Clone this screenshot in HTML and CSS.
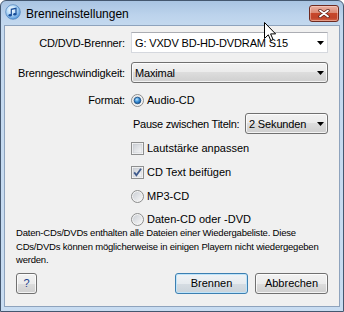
FILE: index.html
```html
<!DOCTYPE html>
<html lang="de">
<head>
<meta charset="utf-8">
<title>Brenneinstellungen</title>
<link rel="stylesheet" href="styles.css">
</head>
<body>
<svg class="defs" width="0" height="0" aria-hidden="true">
  <defs>
    <radialGradient id="iconGrad" cx="0.4" cy="0.35" r="0.75">
      <stop offset="0" stop-color="#ffffff"/>
      <stop offset="0.45" stop-color="#b4daf8"/>
      <stop offset="1" stop-color="#3b84d2"/>
    </radialGradient>
    <linearGradient id="boxGrad" x1="0" y1="0" x2="1" y2="1">
      <stop offset="0" stop-color="#cbcfd5"/>
      <stop offset="1" stop-color="#f7f7f7"/>
    </linearGradient>
    <radialGradient id="dotGrad" cx="0.4" cy="0.35" r="0.7">
      <stop offset="0" stop-color="#b9e6ff"/>
      <stop offset="0.5" stop-color="#3b8fd6"/>
      <stop offset="1" stop-color="#0d4c8f"/>
    </radialGradient>
  </defs>
</svg>
<div class="window">
  <div class="titlebar">
    <svg class="app-icon" width="16" height="16" viewBox="0 0 16 16">
      <circle cx="8" cy="8" r="7.3" fill="url(#iconGrad)" stroke="#4a7fb8" stroke-width="0.7"/>
      <path d="M6.3 11.2V5.3L11 4.3V10.2" fill="none" stroke="#174c98" stroke-width="1.2"/>
      <ellipse cx="5.1" cy="11.3" rx="1.6" ry="1.2" fill="#174c98"/>
      <ellipse cx="9.8" cy="10.3" rx="1.6" ry="1.2" fill="#174c98"/>
    </svg>
    <span class="title">Brenneinstellungen</span>
    <div class="close-btn">
      <svg width="12" height="9" viewBox="0 0 12 9">
        <path d="M2 1.5L10 7.5M10 1.5L2 7.5" stroke="#5b2118" stroke-width="3.4" stroke-linecap="round"/>
        <path d="M2 1.5L10 7.5M10 1.5L2 7.5" stroke="#ffffff" stroke-width="1.8" stroke-linecap="round"/>
      </svg>
    </div>
  </div>

  <div class="client">
    <div class="row">
      <span class="label">CD/DVD-Brenner:</span>
      <div class="combo combo-edit"><span class="combo-text">G: VXDV BD-HD-DVDRAM S15</span><i class="arrow"></i></div>
    </div>
    <div class="row row-speed">
      <span class="label">Brenngeschwindigkeit:</span>
      <div class="combo combo-list"><span class="combo-text">Maximal</span><i class="arrow"></i></div>
    </div>
    <div class="row row-format">
      <span class="label">Format:</span>
      <div class="option">
        <svg class="radio" width="13" height="13" viewBox="0 0 13 13">
          <circle cx="6.5" cy="6.5" r="6" fill="#f4f4f4" stroke="#8b8c8c"/>
          <circle cx="6.5" cy="6.5" r="4.6" fill="url(#boxGrad)"/>
          <circle cx="6.5" cy="6.5" r="3.3" fill="url(#dotGrad)" stroke="#1b4d80" stroke-width="0.8"/>
        </svg>
        <span>Audio-CD</span>
      </div>
    </div>

    <div class="options">
      <div class="pause-row">
        <span class="pause-label">Pause zwischen Titeln:</span>
        <div class="combo combo-list combo-small"><span class="combo-text">2 Sekunden</span><i class="arrow"></i></div>
      </div>
      <div class="option opt-volume">
        <svg class="check" width="13" height="13" viewBox="0 0 13 13">
          <rect x="0.5" y="0.5" width="12" height="12" fill="#ffffff" stroke="#8e8f8f"/>
          <rect x="2" y="2" width="9" height="9" fill="url(#boxGrad)" stroke="#c3c6cb" stroke-width="0.6"/>
        </svg>
        <span>Lautstärke anpassen</span>
      </div>
      <div class="option opt-cdtext">
        <svg class="check" width="13" height="13" viewBox="0 0 13 13">
          <rect x="0.5" y="0.5" width="12" height="12" fill="#ffffff" stroke="#8e8f8f"/>
          <rect x="2" y="2" width="9" height="9" fill="url(#boxGrad)" stroke="#c3c6cb" stroke-width="0.6"/>
          <path d="M3.2 6.4L5.4 9.2L10 2.8" fill="none" stroke="#3f5a8c" stroke-width="1.8"/>
        </svg>
        <span>CD Text beifügen</span>
      </div>
      <div class="option opt-mp3">
        <svg class="radio" width="13" height="13" viewBox="0 0 13 13">
          <circle cx="6.5" cy="6.5" r="6" fill="#f4f4f4" stroke="#8b8c8c"/>
          <circle cx="6.5" cy="6.5" r="4.6" fill="url(#boxGrad)"/>
        </svg>
        <span>MP3-CD</span>
      </div>
      <div class="option opt-data">
        <svg class="radio" width="13" height="13" viewBox="0 0 13 13">
          <circle cx="6.5" cy="6.5" r="6" fill="#f4f4f4" stroke="#8b8c8c"/>
          <circle cx="6.5" cy="6.5" r="4.6" fill="url(#boxGrad)"/>
        </svg>
        <span>Daten-CD oder -DVD</span>
      </div>
    </div>

    <p class="note">Daten-CDs/DVDs enthalten alle Dateien einer Wiedergabeliste. Diese CDs/DVDs können möglicherweise in einigen Playern nicht wiedergegeben werden.</p>

    <div class="buttons">
      <button class="btn btn-help" type="button">?</button>
      <span class="spacer"></span>
      <button class="btn btn-default" type="button">Brennen</button>
      <button class="btn" type="button">Abbrechen</button>
    </div>
  </div>

  <svg class="cursor" width="13" height="20" viewBox="0 0 13 20">
    <path d="M0.5 0.5V16.5L4.3 12.8L6.8 18.6L9.1 17.6L6.6 11.9H11.6Z" fill="#ffffff" stroke="#000000" stroke-width="1" stroke-linejoin="miter"/>
  </svg>
</div>
</body>
</html>
```

FILE: styles.css
```css
* {
  box-sizing: border-box;
}

html,
body {
  margin: 0;
  padding: 0;
  background: #ffffff;
}

body {
  font-family: "Liberation Sans", Arial, sans-serif;
  font-size: 11px;
  color: #000000;
}

.defs {
  position: absolute;
  width: 0;
  height: 0;
}

.window {
  position: relative;
  width: 344px;
  height: 312px;
  border: 1px solid #44576f;
  border-radius: 6px 6px 0 0;
  background: linear-gradient(to bottom, #a9c4e2 0px, #bcd3ec 14px, #c4d9ef 25px, #c8dcf1 100%);
  padding: 0 3px 4px;
  display: flex;
  flex-direction: column;
  overflow: hidden;
}

.titlebar {
  height: 24px;
  display: flex;
  align-items: flex-start;
  flex: none;
}

.app-icon {
  margin: 3px 0 0 1px;
  flex: none;
}

.title {
  margin: 5px 0 0 5px;
  font-size: 12px;
  line-height: 16px;
  color: #000000;
}

.close-btn {
  margin: 4px 1px 0 auto;
  width: 30px;
  height: 17px;
  border: 1px solid #6e2a20;
  border-radius: 3px;
  background: linear-gradient(to bottom, #eab0a2 0%, #dc8a74 45%, #c7472b 50%, #c1442a 80%, #d56a4c 100%);
  box-shadow: inset 0 0 0 1px rgba(255, 225, 215, 0.45);
  display: flex;
  align-items: center;
  justify-content: center;
}

.client {
  flex: 1;
  background: #f0f0f0;
  border: 1px solid #8ea3bd;
  padding: 6px 0 0 0;
  display: flex;
  flex-direction: column;
}

.row {
  display: flex;
  align-items: center;
  column-gap: 6px;
}

.label {
  width: 120px;
  text-align: right;
  letter-spacing: -0.15px;
  white-space: nowrap;
  flex: none;
}

.row-speed {
  margin-top: 9px;
}

.row-format {
  margin-top: 10px;
  height: 14px;
}

.combo {
  position: relative;
  width: 197px;
  height: 21px;
  display: flex;
  align-items: center;
  padding-left: 3px;
  flex: none;
  white-space: nowrap;
}

.combo-text {
  line-height: 14px;
  letter-spacing: -0.15px;
}

.combo-edit {
  background: #ffffff;
  border: 1px solid #d5d8de;
  border-top-color: #abadb3;
}

.combo-list {
  border: 1px solid #707070;
  border-radius: 3px;
  background: linear-gradient(to bottom, #f2f2f2 0%, #ebebeb 50%, #dddddd 50%, #cfcfcf 100%);
  box-shadow: inset 0 0 0 1px rgba(255, 255, 255, 0.75);
}

.arrow {
  position: absolute;
  right: 3px;
  top: 8px;
  width: 7px;
  height: 4px;
  background: #000000;
  clip-path: polygon(0 0, 100% 0, 50% 100%);
}

.option {
  display: flex;
  align-items: center;
  column-gap: 3px;
  height: 13px;
  line-height: 13px;
  white-space: nowrap;
}

.option svg {
  flex: none;
}

.options {
  margin-left: 126px;
  display: flex;
  flex-direction: column;
}

.pause-row {
  margin-top: 6px;
  margin-left: 2px;
  width: 195px;
  display: flex;
  align-items: center;
  justify-content: space-between;
  white-space: nowrap;
}

.pause-label {
  letter-spacing: -0.25px;
  flex: none;
}

.combo-small {
  width: 83px;
}

.opt-volume {
  margin-top: 8px;
}

.opt-cdtext {
  margin-top: 11px;
}

.opt-mp3 {
  margin-top: 11px;
}

.opt-data {
  margin-top: 10px;
}

.note {
  margin: 0;
  padding: 0 6px 0 11px;
  font-size: 9.5px;
  line-height: 13.5px;
  letter-spacing: -0.2px;
}

.buttons {
  margin-top: 6px;
  padding: 0 11px 0 11px;
  display: flex;
  column-gap: 7px;
}

.spacer {
  flex: 1;
}

.btn {
  height: 21px;
  width: 73px;
  padding: 0;
  border: 1px solid #707070;
  border-radius: 3px;
  background: linear-gradient(to bottom, #f2f2f2 0%, #ebebeb 50%, #dddddd 50%, #cfcfcf 100%);
  box-shadow: inset 0 0 0 1px rgba(255, 255, 255, 0.75);
  font-family: "Liberation Sans", Arial, sans-serif;
  font-size: 11px;
  color: #000000;
}

.btn-help {
  width: 21px;
  color: #1b3f8f;
}

.btn-default {
  border-color: #3c7fb1;
  box-shadow: inset 0 0 0 1px #bfe4fa;
  background: linear-gradient(to bottom, #f0f3f6 0%, #e6ebef 50%, #d6dde3 50%, #cad3da 100%);
}

.cursor {
  position: absolute;
  left: 263px;
  top: 21px;
}
```
